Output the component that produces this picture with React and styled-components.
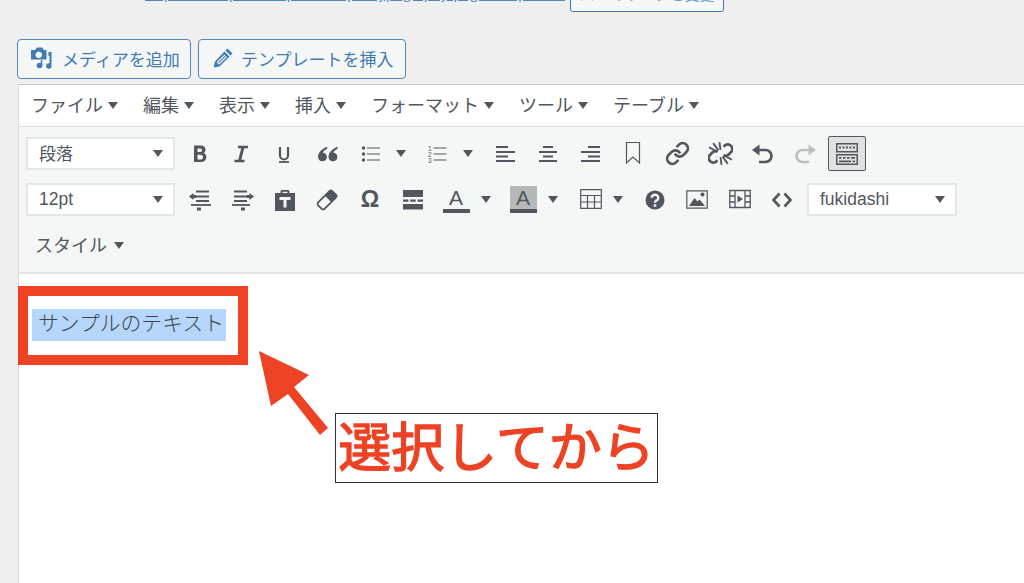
import React from 'react'
import styled, { createGlobalStyle } from 'styled-components'
import { Link as LinkIcon } from 'lucide-react'

const GlobalStyle = createGlobalStyle`
  html, body {
    margin: 0;
    height: 100%;
    background: #efefef;
    overflow: hidden;
  }
  body {
    font-family: "Noto Sans CJK JP", "Liberation Sans", sans-serif;
  }
`

const ink = '#50575e'

const Page = styled.div`
  width: 1024px;
  height: 583px;
  overflow: hidden;
  position: relative;
`

const PermalinkBar = styled.div`
  height: 12px;
  padding-left: 70px;
  display: flex;
  align-items: flex-end;
  overflow: hidden;
`

const PermalinkLabel = styled.span`
  width: 75px;
  font-size: 10.5px;
  line-height: 20px;
  margin-bottom: 9px;
  color: #50575e;
  white-space: nowrap;
`

const PermalinkUrl = styled.a`
  width: 420px;
  font-size: 14px;
  line-height: 20px;
  margin-bottom: 10px;
  color: #4f86bd;
  text-decoration: underline;
  text-decoration-thickness: 1.5px;
  white-space: nowrap;
  overflow: hidden;
`

const PermalinkButton = styled.button`
  margin-left: 5px;
  width: 154px;
  height: 30px;
  flex: none;
  padding: 0 0 13px;
  background: #f6f7f7;
  border: 1.5px solid #3d79b3;
  border-radius: 3px;
  color: #6d9ccb;
  font: 400 15px "Noto Sans CJK JP", sans-serif;
`

const MediaRow = styled.div`
  display: flex;
  gap: 7px;
  margin: 27px 0 0 17px;
`

const MediaButton = styled.button`
  display: flex;
  align-items: center;
  gap: ${(p) => p.$gap}px;
  height: 40px;
  width: ${(p) => p.$w}px;
  padding: 0 0 2px ${(p) => p.$pad}px;
  box-sizing: border-box;
  background: #f5f7f7;
  border: 1.5px solid #4f86bd;
  border-radius: 4px;
  color: #3f7bb5;
  font: 400 17px/1 "Noto Sans CJK JP", sans-serif;
  white-space: nowrap;
`

const Editor = styled.div`
  margin: 5px 0 0 18px;
  border-top: 1px solid #c3c4c7;
  border-left: 1px solid #dcdcde;
  background: #fff;
  height: 500px;
`

const MenuBar = styled.div`
  height: 41px;
  box-sizing: content-box;
  display: flex;
  align-items: center;
  padding-left: 12px;
  background: #fff;
  border-bottom: 1px solid #dcdcde;
`

const MenuItem = styled.div`
  display: flex;
  align-items: center;
  gap: 5px;
  margin-right: 25px;
  padding-bottom: 3px;
  font-size: 18px;
  font-weight: 400;
  color: ${ink};
  white-space: nowrap;
`

const Caret = styled.span`
  display: block;
  flex: none;
  width: 0;
  height: 0;
  margin-top: ${(p) => p.$top || 0}px;
  border-left: 5px solid transparent;
  border-right: 5px solid transparent;
  border-top: 7px solid ${ink};
`

const Toolbar = styled.div`
  height: 147px;
  box-sizing: border-box;
  padding: 10px 0 0 7px;
  background: #f5f6f6;
  border-bottom: 2px solid #e2e4e7;
  display: flex;
  flex-direction: column;
  gap: 13px;
`

const ToolRow = styled.div`
  display: flex;
  align-items: center;
  height: 33px;
`

const Select = styled.div`
  flex: none;
  display: flex;
  align-items: center;
  justify-content: space-between;
  width: ${(p) => p.$w}px;
  height: 33px;
  margin: 0 ${(p) => p.$mr || 0}px 0 ${(p) => p.$ml || 0}px;
  padding: 0 10px 0 11px;
  box-sizing: border-box;
  background: #fff;
  border: 2px solid #e4e6e7;
  color: ${ink};
`

const SelectText = styled.span`
  font-size: ${(p) => (p.$cjk ? 17 : 17.5)}px;
  line-height: 1;
  position: relative;
  top: ${(p) => (p.$cjk ? -1 : 0)}px;
  font-family: ${(p) => (p.$cjk ? '"Noto Sans CJK JP"' : '"Liberation Sans"')}, sans-serif;
  font-weight: 400;
`

const Tool = styled.div`
  flex: none;
  display: flex;
  align-items: center;
  justify-content: center;
  width: ${(p) => p.$w}px;
  height: 33px;
  margin-left: ${(p) => p.$ml || 0}px;
  color: ${ink};
`

const ActiveTool = styled(Tool)`
  height: 35px;
  box-sizing: border-box;
  background: #e0e1e2;
  border: 1.5px solid ${ink};
  border-radius: 2px;
`

const ColorLetter = styled.div`
  width: 27px;
  height: 27px;
  display: flex;
  align-items: center;
  justify-content: center;
  box-sizing: border-box;
  background: ${(p) => (p.$filled ? '#b6b7b8' : 'transparent')};
  border-bottom: 4px solid ${ink};
  color: ${ink};
  font: 400 21px/1 "Liberation Sans", sans-serif;
`

const OmegaGlyph = styled.span`
  color: ${ink};
  font: 700 23px/1 "Liberation Sans", sans-serif;
`

const StyleMenu = styled.div`
  display: flex;
  align-items: center;
  gap: 7px;
  padding: 0 0 3px 9px;
  font-size: 18px;
  font-weight: 400;
  color: ${ink};
`

const Content = styled.div`
  padding: 35px 0 0 13px;
`

const Selected = styled.span`
  display: inline-block;
  height: 32px;
  padding: 0 0 0 6px;
  width: 194px;
  box-sizing: border-box;
  background: #b6d6fb;
  color: #3c434a;
  font-size: 20.8px;
  font-weight: 300;
  line-height: 26px;
  white-space: nowrap;
`

const Highlight = styled.div`
  position: absolute;
  left: 18px;
  top: 286px;
  width: 230px;
  height: 79px;
  box-sizing: border-box;
  border: 10px solid #ee4224;
`

const Arrow = styled.svg`
  position: absolute;
  left: 250px;
  top: 345px;
`

const Callout = styled.div`
  position: absolute;
  left: 335px;
  top: 413px;
  width: 323px;
  height: 70px;
  padding-bottom: 8px;
  box-sizing: border-box;
  border: 1.5px solid #333;
  background: #fff;
  display: flex;
  align-items: center;
  justify-content: center;
  color: #ee4224;
  font-size: 53px;
  font-weight: 400;
  -webkit-text-stroke: 1.4px #ee4224;
  line-height: 1;
  white-space: nowrap;
`

const Icon = ({ size = 20, box = 20, children, color = ink }) => (
  <svg width={size} height={size} viewBox={`0 0 ${box} ${box}`} fill={color} stroke="none">
    {children}
  </svg>
)

const Line = ({ d, w = 2, color = ink }) => (
  <path d={d} fill="none" stroke={color} strokeWidth={w} />
)

const MediaIcon = () => (
  <svg width="24" height="24" viewBox="0 0 24 24" fill="#3f7bb5">
    <path fillRule="evenodd" d="M1 4h4l2-2.500h5L14 4h2.500v9.500H1z M8.800 5.500a3.300 3.300 0 1 0 .01 0z" />
    <path d="M18.500 6h3v14a2.700 2.700 0 1 1-2-2.600V10h-1z" />
    <circle cx="9.500" cy="19.500" r="2.800" />
    <path d="M10.800 14h1.500v5.500h-1.500z" />
  </svg>
)

const PencilIcon = () => (
  <svg width="20" height="20" viewBox="0 0 20 20" fill="#3f7bb5">
    <path d="M14.500 .5l5 5-2 2-5-5z" />
    <path fillRule="evenodd" d="M11.500 3.500l5 5L6.500 18.500.8 19.500l1-5.800z M3.600 14.200l2.500 2.500 7.800-7.800-.9-.9-7.200 7.200-.7-.7 7.200-7.200-.9-.9z" />
  </svg>
)

const icons = {
  bold: (
    <Icon>
      <path fillRule="evenodd" d="M4 1.500h6.500c3.200 0 5 1.600 5 4.200 0 1.700-.9 2.900-2.300 3.400 1.900.4 3.100 1.900 3.100 3.900 0 3-2.200 5-5.500 5H4z M7.500 4.400v3.600h2.400c1.400 0 2.100-.7 2.100-1.800s-.7-1.800-2.100-1.800z M7.500 10.800v4.800h2.900c1.600 0 2.600-.9 2.600-2.400s-1-2.400-2.600-2.400z" />
    </Icon>
  ),
  italic: (
    <Icon>
      <Line d="M7 3h10M3.500 17h10" w="2.400" />
      <Line d="M12 3L8.500 17" w="3" />
    </Icon>
  ),
  underline: (
    <Icon>
      <Line d="M6 3v8.500a4 4 0 0 0 8 0V3" w="2.200" />
      <Line d="M5 18h10" w="1.800" />
    </Icon>
  ),
  quote: (
    <Icon size={22}>
      <path d="M9 3.500C5 5 1 8.500 1 12.500a4 4 0 1 0 4.200-3.800C5.800 7.400 7.500 6 9.400 5.200z" />
      <path d="M18.500 3.500c-4 1.500-8 5-8 9a4 4 0 1 0 4.200-3.800c.6-1.300 2.300-2.700 4.200-3.500z" />
    </Icon>
  ),
  bullist: (
    <Icon size={20}>
      <circle cx="2.500" cy="4" r="1.700" />
      <circle cx="2.500" cy="10" r="1.700" />
      <circle cx="2.500" cy="16" r="1.700" />
      <Line d="M6 4h13M6 10h13M6 16h13" w="1.200" />
    </Icon>
  ),
  numlist: (
    <Icon size={20}>
      <text x="0" y="6.500" fontSize="6.500" fontFamily="Liberation Sans">1</text>
      <text x="0" y="12.500" fontSize="6.500" fontFamily="Liberation Sans">2</text>
      <text x="0" y="18.500" fontSize="6.500" fontFamily="Liberation Sans">3</text>
      <Line d="M5.500 4h13M5.500 10h13M5.500 16h13" w="1.200" />
    </Icon>
  ),
  alignleft: (
    <Icon>
      <Line d="M1 3h12M1 8h19M1 12.500h12M1 17h19" w="2.200" />
    </Icon>
  ),
  aligncenter: (
    <Icon>
      <Line d="M5 3h10M1 8h18M5 12.500h10M1 17h18" w="2.200" />
    </Icon>
  ),
  alignright: (
    <Icon>
      <Line d="M7 3h12M0 8h19M7 12.500h12M0 17h19" w="2.200" />
    </Icon>
  ),
  bookmark: (
    <Icon size={24} box={24}>
      <Line d="M5.500 .5h13v20.500l-6.500-6-6.500 6z" w="1.200" />
    </Icon>
  ),
  unlink: (
    <Icon size={25} box={24}>
      <Line d="M15 5.500l1.500-1.500a4.400 4.400 0 0 1 6 6.200l-2.700 2.700a4.400 4.400 0 0 1-5 .8" w="2.600" />
      <Line d="M9 18.500l-1.500 1.500a4.400 4.400 0 0 1-6-6.200l2.700-2.700a4.400 4.400 0 0 1 5-.8" w="2.600" />
      <Line d="M11 1l1 7.500M5 2l5 7M1 6l8 4.500M23 18l-8-4.500M19 22l-5-7M13 23l-1-7.500" w="1.800" />
    </Icon>
  ),
  undo: (
    <Icon size={24} box={24}>
      <path d="M1 8l7.500-5.500v11z" />
      <Line d="M7 8h7.500a6 6 0 0 1 0 12H8" w="2.600" />
    </Icon>
  ),
  redo: (
    <Icon size={24} box={24} color="#bcbfc1">
      <path d="M23 8l-7.500-5.500v11z" />
      <Line d="M17 8H9.500a6 6 0 0 0 0 12H16" w="2.600" color="#bcbfc1" />
    </Icon>
  ),
  keyboard: (
    <Icon size={26} box={26}>
      <path fillRule="evenodd" d="M2 2h22v9.500H2z M3.500 3.500v6.500h19V3.500z" />
      <path d="M5 5.500h2v2H5zM8.500 5.500h2v2h-2zM12 5.500h2v2h-2zM15.500 5.500h2v2h-2zM19 5.500h2v2h-2z" />
      <path fillRule="evenodd" d="M2 13h22v11H2z M3.500 14.500V22.500h19V14.500z" />
      <path d="M5 16h2.500v1.800H5zM9 16h2.500v1.800H9zM13 16h2.500v1.800H13zM17 16h4v1.800h-4zM5 19.500h12v1.800H5zM18.500 19.500h2.500v1.800h-2.500z" />
    </Icon>
  ),
  outdent: (
    <Icon size={22} box={22}>
      <Line d="M7 2.500h13M7 7.500h13M7 12h13" w="2" />
      <path d="M0 7.500l4.500-3.500v2h2.500v3H4.500v2z" />
      <Line d="M2 16h20" w="1.800" />
      <path d="M8 18.500h4v3H8z" />
    </Icon>
  ),
  indent: (
    <Icon size={22} box={22}>
      <Line d="M2 2.500h13M2 7.500h13M2 12h13" w="2" />
      <path d="M22 7.500l-4.500-3.500v2H15v3h2.500v2z" />
      <Line d="M0 16h18" w="1.800" />
      <path d="M9 18.500h4v3H9z" />
    </Icon>
  ),
  pastetext: (
    <Icon size={22} box={22}>
      <path fillRule="evenodd" d="M1 4h5.500V2.500C6.500 1.500 7.500 1 8 1h6c.5 0 1.500.5 1.500 1.500V4H21v18H1z M8.500 2.800V4h5V2.800z M5.500 8v3h4v7.500h3V11h4V8z" />
    </Icon>
  ),
  eraser: (
    <Icon size={22} box={22}>
      <g transform="rotate(-45 11 11)">
        <rect x="1" y="6.500" width="20" height="9" rx="2" fill="none" stroke={ink} strokeWidth="1.800" />
        <path d="M12.500 6.500H19a2 2 0 0 1 2 2v5a2 2 0 0 1-2 2h-6.500z" />
      </g>
    </Icon>
  ),
  hr: (
    <Icon size={20}>
      <path d="M0 0h20v7H0zM0 14h20v5.500H0z" />
      <path d="M0 9.500h5.500v2.200H0zM7.300 9.500h5.400v2.200H7.300zM14.500 9.500H20v2.200h-5.500z" />
    </Icon>
  ),
  table: (
    <Icon size={22} box={22}>
      <Line d="M.7 .7h20.600v18.600H.7zM.7 6.500h20.600M.7 13h20.600M7.500 6.500v12.800M14.500 6.500v12.800" w="1.200" />
    </Icon>
  ),
  help: (
    <svg width="20" height="20" viewBox="0 0 20 20">
      <circle cx="10" cy="10" r="9.500" fill={ink} />
      <path d="M6.700 7.700a3.300 3 0 1 1 5.200 2.500c-1.200.8-1.900 1.200-1.900 2.500" fill="none" stroke="#f5f6f6" strokeWidth="2.400" />
      <path d="M8.700 14.300h2.600v2.400H8.700z" fill="#f5f6f6" />
    </svg>
  ),
  image: (
    <Icon size={22} box={22}>
      <Line d="M.8 1.800h20.400v17.400H.8z" w="1.200" />
      <path d="M3 17l5.500-8 3 3.500 2-2 5.500 6.500z" />
      <circle cx="16.500" cy="5.500" r="2" />
    </Icon>
  ),
  media: (
    <Icon size={22} box={22}>
      <Line d="M.8 1.500h20.400v17H.8zM6 1.500v17M16 1.500v17M.8 7h5.200M.8 13h5.200M16 7h5.200M16 13h5.200" w="1.300" />
      <path d="M8.500 6.500l5.500 3.500-5.500 3.500z" />
    </Icon>
  ),
  code: (
    <Icon size={22} box={22}>
      <Line d="M8.500 4.500L2.500 11l6 6.500M13.500 4.500l6 6.500-6 6.500" w="2.600" />
    </Icon>
  ),
}

const firstRow = [
  { icon: 'bold', w: 42 },
  { icon: 'italic', w: 40 },
  { icon: 'underline', w: 46 },
  { icon: 'quote', w: 42 },
  { icon: 'bullist', w: 44 },
  { caret: true, w: 16 },
  { icon: 'numlist', w: 44, ml: 7 },
  { caret: true, w: 16 },
  { icon: 'alignleft', w: 42, ml: 8 },
  { icon: 'aligncenter', w: 44 },
  { icon: 'alignright', w: 42 },
  { icon: 'bookmark', w: 42 },
  { link: true, w: 46 },
  { icon: 'unlink', w: 40 },
  { icon: 'undo', w: 46 },
  { icon: 'redo', w: 38 },
]

const secondRow = [
  { icon: 'outdent', w: 42 },
  { icon: 'indent', w: 44 },
  { icon: 'pastetext', w: 40 },
  { icon: 'eraser', w: 44 },
  { omega: true, w: 42 },
  { icon: 'hr', w: 44 },
  { letter: 'plain', w: 42 },
  { caret: true, w: 18 },
  { letter: 'filled', w: 42, ml: 7 },
  { caret: true, w: 18 },
  { icon: 'table', w: 42, ml: 8 },
  { caret: true, w: 12 },
  { icon: 'help', w: 42, ml: 10 },
  { icon: 'image', w: 42 },
  { icon: 'media', w: 44 },
  { icon: 'code', w: 40 },
]

const renderTool = (t, i) => (
  <Tool key={i} $w={t.w} $ml={t.ml}>
    {t.caret && <Caret />}
    {t.icon && icons[t.icon]}
    {t.link && <LinkIcon size={25} strokeWidth={2.6} color={ink} />}
    {t.omega && <OmegaGlyph>Ω</OmegaGlyph>}
    {t.letter && <ColorLetter $filled={t.letter === 'filled'}>A</ColorLetter>}
  </Tool>
)

const menus = ['ファイル', '編集', '表示', '挿入', 'フォーマット', 'ツール', 'テーブル']

export default function App() {
  return (
    <Page>
      <GlobalStyle />
      <PermalinkBar>
        <PermalinkLabel>パーマリンク:</PermalinkLabel>
        <PermalinkUrl>https://example.com/post-sample/typography/page/sample-123/</PermalinkUrl>
        <PermalinkButton>パーマリンクを変更</PermalinkButton>
      </PermalinkBar>
      <MediaRow>
        <MediaButton $w={174} $pad={12} $gap={8}>
          <MediaIcon />
          メディアを追加
        </MediaButton>
        <MediaButton $w={208} $pad={14} $gap={8}>
          <PencilIcon />
          テンプレートを挿入
        </MediaButton>
      </MediaRow>
      <Editor>
        <MenuBar>
          {menus.map((m) => (
            <MenuItem key={m}>
              {m}
              <Caret $top={2} />
            </MenuItem>
          ))}
        </MenuBar>
        <Toolbar>
          <ToolRow>
            <Select $w={149} $mr={4}>
              <SelectText $cjk>段落</SelectText>
              <Caret />
            </Select>
            {firstRow.map(renderTool)}
            <ActiveTool $w={38} $ml={4}>{icons.keyboard}</ActiveTool>
          </ToolRow>
          <ToolRow>
            <Select $w={149} $mr={4}>
              <SelectText>12pt</SelectText>
              <Caret />
            </Select>
            {secondRow.map(renderTool)}
            <Select $w={150} $ml={5}>
              <SelectText>fukidashi</SelectText>
              <Caret />
            </Select>
          </ToolRow>
          <ToolRow>
            <StyleMenu>
              スタイル
              <Caret $top={2} />
            </StyleMenu>
          </ToolRow>
        </Toolbar>
        <Content>
          <Selected>サンプルのテキスト</Selected>
        </Content>
      </Editor>
      <Highlight />
      <Arrow width="90" height="100" viewBox="250 345 90 100">
        <polygon points="259,351 309,375 294,387 328,428 320,435 288,394 271,406" fill="#ee4224" />
      </Arrow>
      <Callout>選択してから</Callout>
    </Page>
  )
}
